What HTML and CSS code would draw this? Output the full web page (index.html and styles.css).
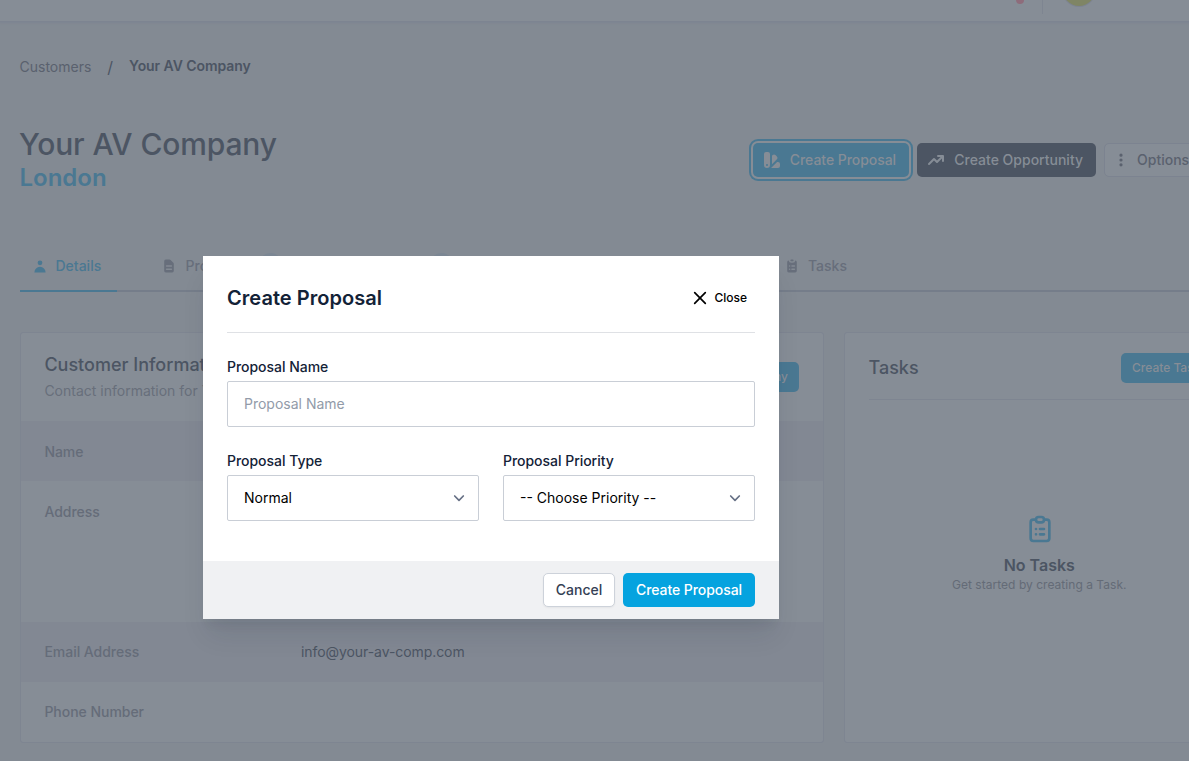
FILE: index.html
```html
<!DOCTYPE html>
<html lang="en">
<head>
<meta charset="utf-8">
<title>Your AV Company</title>
<link rel="stylesheet" href="styles.css">
</head>
<body>
<div class="page">
  <header class="topbar">
    <span class="notify-dot"></span>
    <span class="topbar-divider"></span>
    <span class="avatar"></span>
  </header>
  <nav class="breadcrumb">
    <span>Customers</span>
    <span class="slash">/</span>
    <span class="current">Your AV Company</span>
  </nav>
  <section class="heading">
    <div class="heading-text">
      <h1>Your AV Company</h1>
      <h2>London</h2>
    </div>
    <div class="actions">
      <button class="btn btn-primary focused">
        <svg class="icon20" viewBox="0 0 20 20" fill="currentColor"><path fill-rule="evenodd" d="M4 2a2 2 0 00-2 2v11a3 3 0 106 0V4a2 2 0 00-2-2H4zm1 14a1 1 0 100-2 1 1 0 000 2zm5-1.757l4.9-4.9a2 2 0 000-2.828L13.485 5.1a2 2 0 00-2.828 0L10 5.757v8.486zM16 18H9.071l6-6H16a2 2 0 012 2v2a2 2 0 01-2 2z"/></svg>
        <span>Create Proposal</span>
      </button>
      <button class="btn btn-dark">
        <svg class="icon20" viewBox="0 0 20 20" fill="currentColor"><path fill-rule="evenodd" d="M12 7a1 1 0 110-2h5a1 1 0 011 1v5a1 1 0 11-2 0V8.414l-4.293 4.293a1 1 0 01-1.414 0L8 10.414l-4.293 4.293a1 1 0 01-1.414-1.414l5-5a1 1 0 011.414 0L11 10.586 14.586 7H12z"/></svg>
        <span>Create Opportunity</span>
      </button>
      <button class="btn btn-outline">
        <svg class="icon20 dots" viewBox="0 0 20 20" fill="currentColor"><path d="M10 6a2 2 0 110-4 2 2 0 010 4zM10 12a2 2 0 110-4 2 2 0 010 4zM10 18a2 2 0 110-4 2 2 0 010 4z"/></svg>
        <span>Options</span>
      </button>
    </div>
  </section>
  <nav class="tabs">
    <a class="tab tab-details">
      <svg class="tab-icon" viewBox="0 0 20 20" fill="currentColor"><path d="M10 9a3 3 0 100-6 3 3 0 000 6zm-7 9a7 7 0 1114 0H3z"/></svg>
      <span>Details</span>
    </a>
    <a class="tab tab-proposals">
      <svg class="tab-icon" viewBox="0 0 20 20" fill="currentColor"><path fill-rule="evenodd" d="M4 4a2 2 0 012-2h4.586A2 2 0 0112 2.586L15.414 6A2 2 0 0116 7.414V16a2 2 0 01-2 2H6a2 2 0 01-2-2V4zm2 6a1 1 0 011-1h6a1 1 0 110 2H7a1 1 0 01-1-1zm1 3a1 1 0 100 2h6a1 1 0 100-2H7z"/></svg>
      <span>Proposals</span>
      <span class="count"></span>
    </a>
    <span class="count count-second"></span>
    <a class="tab tab-tasks">
      <svg class="tab-icon" viewBox="0 0 20 20" fill="currentColor"><path d="M9 2a1 1 0 000 2h2a1 1 0 100-2H9z"/><path fill-rule="evenodd" d="M4 5a2 2 0 012-2 3 3 0 003 3h2a3 3 0 003-3 2 2 0 012 2v11a2 2 0 01-2 2H6a2 2 0 01-2-2V5zm3 4a1 1 0 000 2h.01a1 1 0 100-2H7zm3 0a1 1 0 000 2h3a1 1 0 100-2h-3zm-3 4a1 1 0 100 2h.01a1 1 0 100-2H7zm3 0a1 1 0 100 2h3a1 1 0 100-2h-3z"/></svg>
      <span>Tasks</span>
    </a>
  </nav>
  <main class="columns">
    <section class="card">
      <div class="info-head">
        <div>
          <h3>Customer Information</h3>
          <p>Contact information for Your AV Company</p>
        </div>
        <button class="btn-small">Edit Company</button>
      </div>
      <dl class="rows">
        <div class="row shaded"><dt>Name</dt><dd></dd></div>
        <div class="row tall"><dt>Address</dt><dd></dd></div>
        <div class="row shaded"><dt>Email Address</dt><dd>info@your-av-comp.com</dd></div>
        <div class="row"><dt>Phone Number</dt><dd></dd></div>
      </dl>
    </section>
    <section class="card tasks">
      <div class="tasks-head">
        <h3>Tasks</h3>
        <button class="btn-small">Create Task</button>
      </div>
      <div class="empty">
        <svg class="empty-icon" viewBox="0 0 24 24" fill="none" stroke="currentColor" stroke-width="2" stroke-linecap="round" stroke-linejoin="round"><path d="M9 5H7a2 2 0 00-2 2v12a2 2 0 002 2h10a2 2 0 002-2V7a2 2 0 00-2-2h-2M9 5a2 2 0 002 2h2a2 2 0 002-2M9 5a2 2 0 012-2h2a2 2 0 012 2m-3 7h3m-3 4h3m-6-4h.01M9 16h.01"/></svg>
        <h4>No Tasks</h4>
        <p>Get started by creating a Task.</p>
      </div>
    </section>
  </main>
</div>

<div class="modal" role="dialog">
  <div class="modal-body">
    <div class="modal-head">
      <h2>Create Proposal</h2>
      <button class="close">
        <svg viewBox="0 0 14 14" fill="none" stroke="currentColor" stroke-width="1.7" stroke-linecap="round"><path d="M1.7 1.7l10.6 10.6M12.3 1.7L1.7 12.3"/></svg>
        <span>Close</span>
      </button>
    </div>
    <form class="form">
      <div class="field wide">
        <label>Proposal Name</label>
        <div class="control placeholder">Proposal Name</div>
      </div>
      <div class="field">
        <label>Proposal Type</label>
        <div class="control"><span>Normal</span>
          <svg class="chevron" viewBox="0 0 12 8" fill="none" stroke="currentColor" stroke-width="1.7" stroke-linecap="round" stroke-linejoin="round"><path d="M1.7 2L6 6.3 10.3 2"/></svg>
        </div>
      </div>
      <div class="field">
        <label>Proposal Priority</label>
        <div class="control"><span>-- Choose Priority --</span>
          <svg class="chevron" viewBox="0 0 12 8" fill="none" stroke="currentColor" stroke-width="1.7" stroke-linecap="round" stroke-linejoin="round"><path d="M1.7 2L6 6.3 10.3 2"/></svg>
        </div>
      </div>
    </form>
  </div>
  <div class="modal-foot">
    <button class="cancel">Cancel</button>
    <button class="submit">Create Proposal</button>
  </div>
</div>
</body>
</html>
```

FILE: styles.css
```css
* { box-sizing: border-box; margin: 0; padding: 0; }
html { overflow: hidden; }
body {
  position: relative;
  width: 1189px;
  height: 761px;
  overflow: hidden;
  background: #838a93;
  color: #4c5563;
  font: 400 14px/20px Inter, sans-serif;
}
button { font: inherit; border: 0; white-space: nowrap; }
svg { display: block; flex: none; }
.page { width: 1255px; }

.topbar {
  display: flex;
  align-items: flex-start;
  justify-content: flex-end;
  height: 21px;
  padding-right: 160px;
  background: #868d96;
  box-shadow: 0 1px 2px 1px #7d8491;
}
.notify-dot { width: 8px; height: 8px; margin-top: -4px; border-radius: 50%; background: #8e6c7b; }
.topbar-divider { width: 1px; height: 14px; margin-left: 18px; background: #7e8591; }
.avatar { width: 32px; height: 32px; margin: -26px 0 0 20px; border-radius: 50%; background: #7f8565; box-shadow: 0 0 0 1px #7d8491; }

.breadcrumb { display: flex; height: 20px; margin: 36px 19.5px 0; }
.breadcrumb > span:first-child { color: #5a616e; }
.slash { margin: 0 16px; font-size: 16px; }
.current { font-weight: 600; line-height: 18px; letter-spacing: -.06px; }

.heading { display: flex; justify-content: space-between; margin: 48px 20px 0; height: 68px; }
.heading-text { margin-left: -1px; }
h1 { font-size: 30px; line-height: 36px; font-weight: 500; margin-top: 1px; letter-spacing: -.13px; }
.heading h2 { margin-left: .5px; font-size: 24px; line-height: 32px; font-weight: 600; color: #4a7892; }
.actions { display: flex; gap: 8px; padding-top: 18px; }
.btn { display: flex; align-items: center; height: 34px; border-radius: 5px; font-weight: 500; padding: 0 13px 0 9px; }
.icon20 { width: 20px; height: 20px; margin-right: 8px; }
.btn-primary { width: 156px; padding-left: 8.5px; background: #4a7892; color: #868d96; letter-spacing: -.05px; }
.focused { box-shadow: 0 0 0 2px #868d96, 0 0 0 4px #4a7892; }
.btn-dark { background: #4c5563; color: #868d96; }
.btn-outline { width: 131px; background: #868d96; color: #5a616e; border: 1px solid #7c8390; padding-left: 6px; }
.dots { padding: 2px; margin-right: 6px; }

.tabs { display: flex; height: 51px; margin: 48px 20px 0; border-bottom: 2px solid #757d8a; color: #676e7b; font-weight: 500; }
.tab { display: flex; gap: 7px; height: 51px; padding: 15px 14px 0 12px; }
.tab-icon { width: 16px; height: 16px; margin-top: 2px; }
.tab-details { width: 97px; color: #4a7892; border-bottom: 2px solid #4a7892; }
.tab-details span { margin-left: .5px; }
.tab-proposals { width: 170px; margin-left: 32px; padding-right: 0; gap: 8.5px; }
.count { width: 21px; height: 20px; border-radius: 10px; background: #7b8693; }
.tab-proposals .count { margin: -3px 0 0 0; }
.count-second { margin: 12px 0 0 112px; }
.tab-tasks { margin-left: 320px; gap: 8px; }

.columns { display: flex; gap: 20px; margin: 40px 20px 0; }
.card { width: 804px; height: 411px; background: #868d96; border: 1px solid #7e8591; border-radius: 3px; overflow: hidden; }
.card h3 { font-size: 18px; line-height: 24px; font-weight: 500; }
.info-head { display: flex; justify-content: space-between; align-items: center; height: 88px; padding: 0 24px 0 23.4px; }
.info-head p { color: #686f7b; margin-top: 4px; }
.btn-small { height: 30px; padding: 0 11px; border-radius: 5px; background: #4a7892; color: #868d96; font-size: 12px; font-weight: 500; }
.row { display: grid; grid-template-columns: 256.6px 1fr; height: 60px; padding: 21px 24px 0 23.4px; }
.row dt { font-weight: 500; color: #656c79; letter-spacing: -.03px; }
.row dd { color: #4c5563; letter-spacing: -.07px; }
.tall { height: 140px; margin-bottom: 1px; }
.tall ~ .row { padding-top: 20px; }
.shaded { background: #828893; }
.tasks { width: 390px; padding: 20px 23px 0 23.5px; flex: none; }
.tasks-head { display: flex; justify-content: space-between; height: 47px; border-bottom: 1px solid #7e8591; }
.tasks-head h3 { margin-top: 3px; }
.tasks-head .btn-small { width: 89px; }
.empty { display: flex; flex-direction: column; align-items: center; padding-top: 113px; }
.empty-icon { width: 32px; height: 32px; margin-left: 1px; color: #4a7892; }
.empty h4 { margin-top: 10px; font-size: 16px; line-height: 20px; font-weight: 600; }
.empty p { font-size: 12px; line-height: 19px; color: #646b77; letter-spacing: .03px; }

.modal {
  position: absolute;
  left: 203px;
  top: 256px;
  width: 576px;
  height: 363px;
  background: #fff;
  box-shadow: 0 20px 25px -5px rgba(20, 28, 45, .1), 0 10px 10px -5px rgba(20, 28, 45, .06);
}
.modal-body { height: 305px; padding: 24px 24px 0; }
.modal-head { display: flex; justify-content: space-between; align-items: flex-start; height: 53px; border-bottom: 1px solid #dfe1e5; }
.modal-head h2 { margin-top: 4px; font-size: 20px; line-height: 28px; font-weight: 600; color: #132237; letter-spacing: .04px; }
.close { display: flex; align-items: center; gap: 7px; margin: 9px 8px 0 0; height: 18px; background: none; color: #000; font-size: 12px; font-weight: 500; }
.close svg { width: 14px; height: 14px; }
.form { display: grid; grid-template-columns: 252px 252px; gap: 24px; padding-top: 24px; }
.wide { grid-column: span 2; }
label { display: block; height: 24px; font-weight: 500; color: #132237; letter-spacing: -.03px; }
.control { display: flex; align-items: center; justify-content: space-between; height: 46px; padding: 0 13px 0 16px; border: 1px solid #c9ced6; border-radius: 2px; color: #000; }
.placeholder { color: #929ba9; }
.chevron { width: 12px; height: 8px; color: #667085; }
.modal-foot { display: flex; justify-content: flex-end; gap: 8px; height: 58px; padding: 12px 24px; background: #f0f1f3; }
.modal-foot button { height: 34px; border-radius: 5px; font-weight: 500; letter-spacing: -.03px; }
.cancel { width: 72px; background: #fff; color: #344054; border: 1px solid #cdd2da; box-shadow: 0 1px 2px rgba(0, 0, 0, .05); }
.modal-foot .submit { width: 132px; background: #05a3df; color: #fff; letter-spacing: -.06px; }
```
